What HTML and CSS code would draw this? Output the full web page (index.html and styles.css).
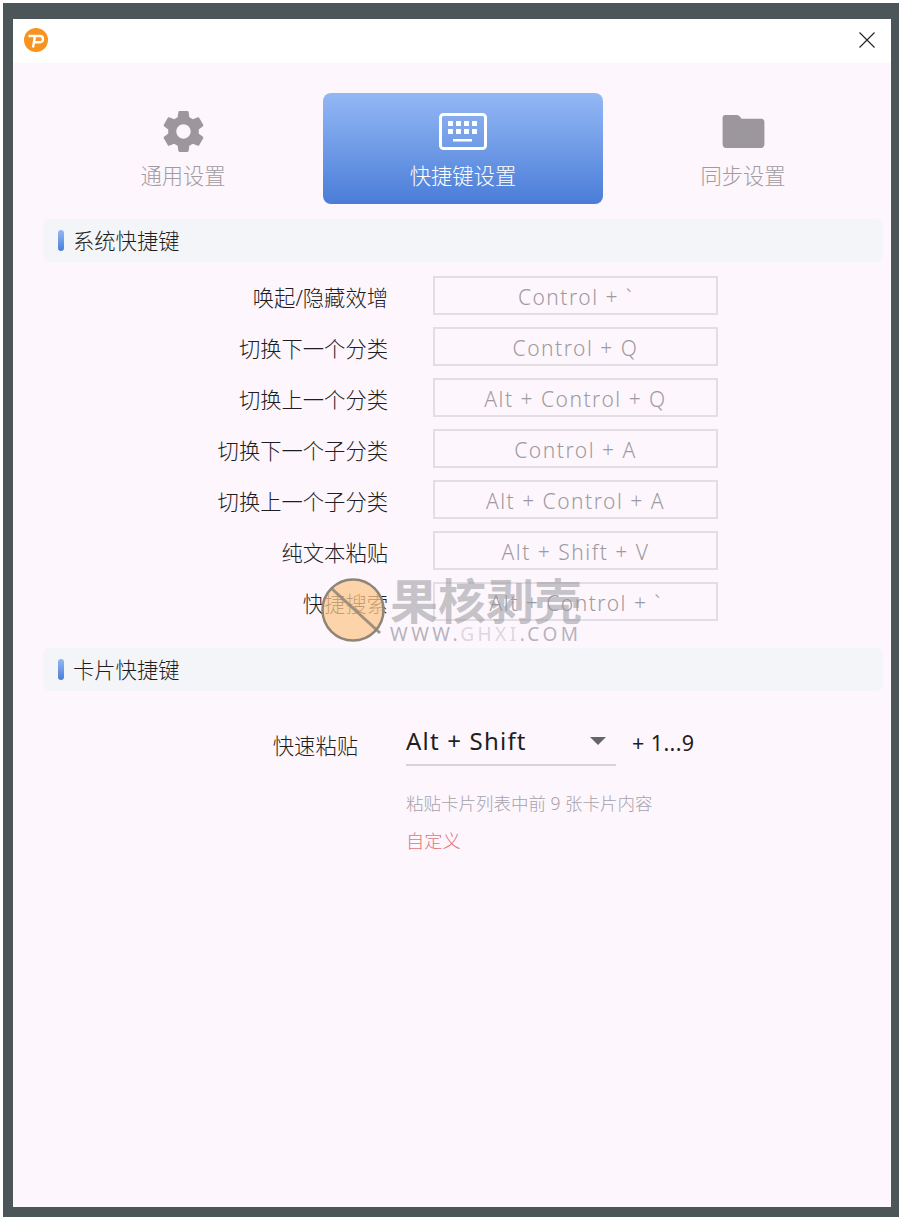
FILE: index.html
```html
<!DOCTYPE html>
<html lang="zh-CN">
<head>
<meta charset="utf-8">
<title>设置</title>
<link rel="stylesheet" href="styles.css">
</head>
<body>
<div class="frame">
  <div class="window">
    <header class="titlebar">
      <svg class="logo" viewBox="0 0 24 24" width="24" height="24">
        <circle cx="12" cy="12" r="12" fill="#f7931e"/>
        <path d="M4.500 8 H16 C20 8 20 14.300 16 14.300 H10 M11 8 L9 19.500" fill="none" stroke="#fff" stroke-width="2.400" stroke-linejoin="round"/>
      </svg>
      <svg class="close" viewBox="0 0 16 16" width="16" height="16">
        <path d="M0.500 0.500 L15.500 15.500 M15.500 0.500 L0.500 15.500" fill="none" stroke="#222" stroke-width="1.100"/>
      </svg>
    </header>
    <main class="content">
      <nav class="tabs">
        <div class="tab">
          <div class="tab-icon">
            <svg viewBox="0 0 24 24" width="49" height="49">
              <path fill="#9c979d" fill-rule="evenodd" d="M19.430 12.980c.04-.32.07-.64.07-.98s-.03-.66-.07-.98l2.110-1.650c.19-.15.24-.42.12-.64l-2-3.460c-.12-.22-.39-.3-.61-.22l-2.490 1c-.52-.4-1.080-.73-1.690-.98l-.38-2.650C14.460 2.180 14.250 2 14 2h-4c-.25 0-.46.18-.49.42l-.38 2.650c-.61.25-1.170.59-1.690.98l-2.490-1c-.23-.09-.49 0-.61.22l-2 3.460c-.13.22-.07.49.12.64l2.110 1.650c-.04.32-.07.65-.07.98s.03.66.07.98l-2.110 1.650c-.19.15-.24.42-.12.64l2 3.460c.12.22.39.3.61.22l2.490-1c.52.4 1.080.73 1.690.98l.38 2.650c.03.24.24.42.49.42h4c.25 0 .46-.18.49-.42l.38-2.650c.61-.25 1.170-.59 1.690-.98l2.490 1c.23.09.49 0 .61-.22l2-3.460c.12-.22.07-.49-.12-.64l-2.110-1.650zM12 15.500c-1.930 0-3.500-1.570-3.500-3.500s1.570-3.500 3.500-3.500 3.500 1.570 3.500 3.500-1.570 3.500-3.500 3.500z"/>
            </svg>
          </div>
          <span class="tab-label">通用设置</span>
        </div>
        <div class="tab tab-active">
          <div class="tab-icon">
            <svg viewBox="0 0 48 38" width="48" height="38">
              <rect x="1.500" y="1.500" width="45" height="34" rx="3" fill="none" stroke="#fff" stroke-width="3"/>
              <g fill="#fff">
                <rect x="9" y="8" width="5" height="5"/><rect x="17" y="8" width="5" height="5"/><rect x="25" y="8" width="5" height="5"/><rect x="33" y="8" width="5" height="5"/>
                <rect x="9" y="16" width="5" height="5"/><rect x="17" y="16" width="5" height="5"/><rect x="25" y="16" width="5" height="5"/><rect x="33" y="16" width="5" height="5"/>
                <rect x="14" y="26" width="19" height="2.500"/>
              </g>
            </svg>
          </div>
          <span class="tab-label">快捷键设置</span>
        </div>
        <div class="tab">
          <div class="tab-icon">
            <svg viewBox="0 0 44 36" width="43" height="35">
              <path fill="#9c979d" d="M3 1 H15 C17 1 18 2 19 3.500 L20 5 H40 C42 5 43.500 6 43.500 8 V31 C43.500 33 42 35 40 35 H4 C2 35 0.500 33 0.500 31 V4 C0.500 2 1.500 1 3 1 Z"/>
            </svg>
          </div>
          <span class="tab-label">同步设置</span>
        </div>
      </nav>

      <section class="section section-system">
        <h2 class="section-head"><i class="marker"></i><span class="head-text">系统快捷键</span></h2>
        <div class="rows">
          <div class="row"><label class="row-label">唤起/隐藏效增</label><div class="keybox">Control + `</div></div>
          <div class="row"><label class="row-label">切换下一个分类</label><div class="keybox">Control + Q</div></div>
          <div class="row"><label class="row-label">切换上一个分类</label><div class="keybox">Alt + Control + Q</div></div>
          <div class="row"><label class="row-label">切换下一个子分类</label><div class="keybox">Control + A</div></div>
          <div class="row"><label class="row-label">切换上一个子分类</label><div class="keybox">Alt + Control + A</div></div>
          <div class="row"><label class="row-label">纯文本粘贴</label><div class="keybox">Alt + Shift + V</div></div>
          <div class="row"><label class="row-label">快捷搜索</label><div class="keybox">Alt + Control + `</div></div>
        </div>
      </section>

      <section class="section section-card">
        <h2 class="section-head"><i class="marker"></i><span class="head-text">卡片快捷键</span></h2>
        <div class="paste">
          <label class="paste-label">快速粘贴</label>
          <div class="paste-body">
            <div class="paste-line">
              <div class="select"><span>Alt + Shift</span><i class="caret"></i></div>
              <span class="suffix">+ 1...9</span>
            </div>
            <p class="hint">粘贴卡片列表中前 9 张卡片内容</p>
            <a class="custom">自定义</a>
          </div>
        </div>
      </section>
    </main>
  </div>
  <div class="watermark">
    <svg class="wm-logo" viewBox="0 0 66 66" width="66" height="66">
      <circle cx="33" cy="33" r="30.500" fill="#fcc88c" fill-opacity=".75" stroke="#8f8478" stroke-width="2.500"/>
      <path d="M11 11 L60 56" stroke="#8f8478" stroke-width="3" opacity=".85"/>
    </svg>
    <div class="wm-text">
      <span class="wm-title">果核剥壳</span>
      <span class="wm-url">WWW.<b class="wm-faint">GHXI</b>.COM</span>
    </div>
  </div>
</div>
</body>
</html>
```

FILE: styles.css
```css
* { box-sizing: border-box; }
html, body { margin: 0; padding: 0; background: #fff; }
body {
  width: 902px;
  height: 1221px;
  padding: 3px 3px 4px 3px;
  font-family: "Noto Sans", "Noto Sans CJK SC", sans-serif;
  font-weight: 300;
  color: #1e1e22;
  overflow: hidden;
}
.frame {
  position: relative;
  height: 100%;
  background: #4c5558;
  padding: 16px 8px 10px 10px;
}
.window { height: 100%; display: flex; flex-direction: column; background: #fdf6fd; }
.titlebar {
  height: 44px;
  flex: none;
  background: #fff;
  display: flex;
  align-items: center;
  justify-content: space-between;
  padding: 0 16px 2px 11px;
}
.content { flex: 1; padding: 30px 8px 0 30px; }
.tabs { display: flex; height: 111px; }
.tab {
  width: 280px;
  display: flex;
  flex-direction: column;
  align-items: center;
  border-radius: 8px;
  color: #9f9ba1;
}
.tab-icon { height: 49px; margin-top: 14px; flex: none; display: flex; align-items: center; }
.tab-label { font-size: 21.300px; line-height: 28px; margin-top: 6px; }
.tab-active { background: linear-gradient(#94b8f5, #4a7dd8); color: #fff; }
.section { margin: 0; }
.section-system { margin-top: 15px; }
.section-card { margin-top: 27px; }
.section-head {
  height: 43px;
  margin: 0;
  display: flex;
  align-items: center;
  gap: 9px;
  padding: 0 0 0 15px;
  background: #f4f5f9;
  border-radius: 6px;
  font-size: 21.300px;
  font-weight: 300;
  color: #1e1e22;
}
.head-text { margin-bottom: 2px; }
.marker {
  width: 6px;
  height: 21px;
  border-radius: 3px;
  background: linear-gradient(#94b8f5, #4a7dd8);
}
.rows { padding-top: 14px; display: flex; flex-direction: column; gap: 12px; }
.row { display: flex; align-items: center; height: 39px; }
.row-label { width: 345px; text-align: right; font-size: 21.300px; margin-right: 45px; padding-top: 2px; }
.keybox {
  width: 285px;
  height: 39px;
  border: 2px solid #e2dee4;
  text-align: center;
  line-height: 39px;
  font-size: 21px;
  color: #9d9ba1;
  letter-spacing: 1.500px;
}
.paste { display: flex; padding-top: 33px; }
.paste-label { width: 315px; text-align: right; font-size: 21.300px; line-height: 44px; margin-right: 48px; }
.paste-body { display: flex; flex-direction: column; }
.paste-line { display: flex; align-items: flex-start; }
.select {
  width: 210px;
  height: 42px;
  border-bottom: 2px solid #d6d2d8;
  display: flex;
  align-items: center;
  justify-content: space-between;
  font-size: 24px;
  font-weight: 400;
  padding: 0 10px 8px 0;
  letter-spacing: 1.200px;
}
.caret {
  border-left: 8px solid transparent;
  border-right: 8px solid transparent;
  border-top: 8px solid #666;
  margin-top: 2px;
}
.suffix { margin-left: 16px; font-size: 21.500px; line-height: 38px; letter-spacing: .4px; font-weight: 400; }
.hint { margin: 22px 0 0; font-size: 17.500px; line-height: 30px; color: #a5a3a9; }
.custom { margin-top: 8px; font-size: 18.300px; line-height: 30px; color: #e2757a; }
.watermark {
  position: absolute;
  left: 317px;
  top: 574px;
  display: flex;
  align-items: flex-start;
  gap: 4px;
  pointer-events: none;
}
.wm-text { display: flex; flex-direction: column; }
.wm-title {
  font-size: 48px;
  line-height: 44px;
  font-weight: 700;
  color: rgba(150,150,155,.55);
  margin-top: 2px;
}
.wm-url { font-size: 19px; line-height: 22px; letter-spacing: 3.500px; font-weight: 400; color: rgba(140,140,150,.65); }
.wm-faint { font-weight: 400; color: rgba(140,140,150,.3); }
```
